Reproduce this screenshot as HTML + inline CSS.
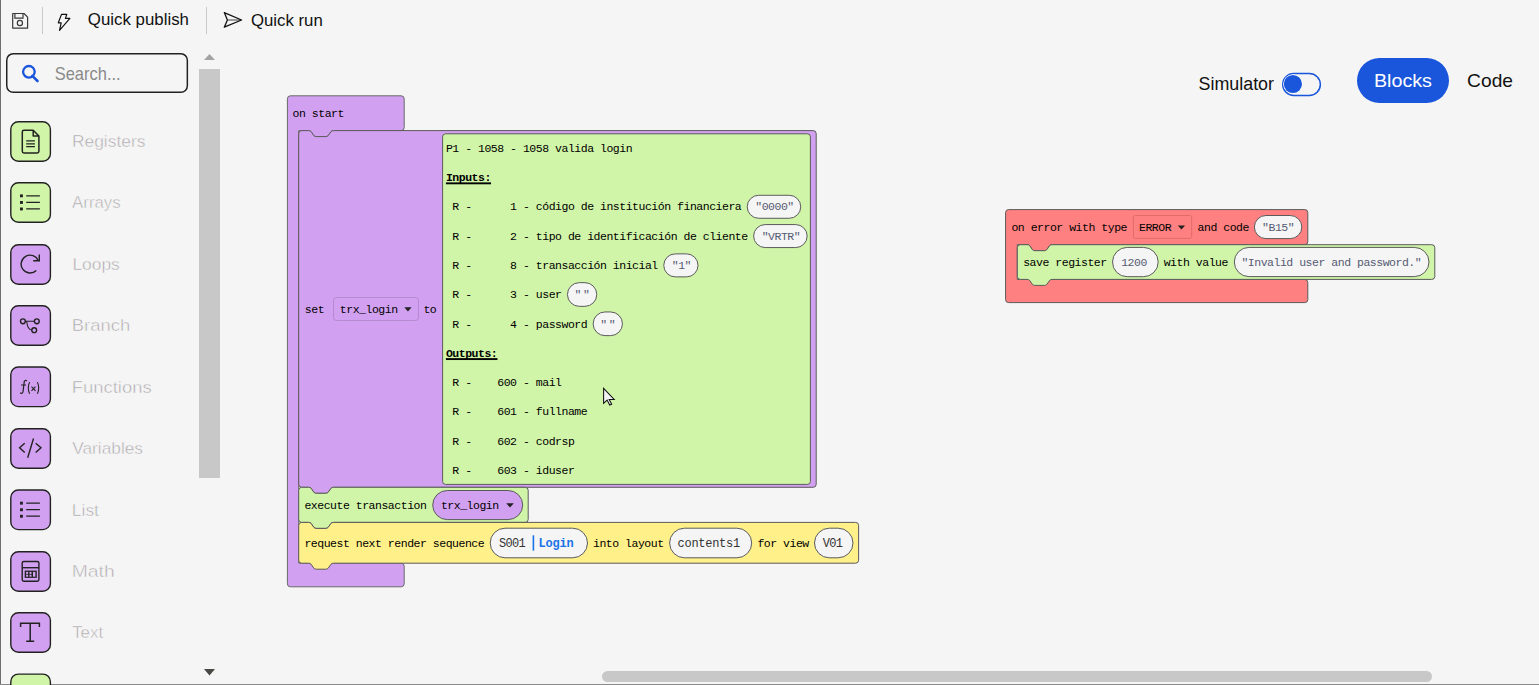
<!DOCTYPE html>
<html><head><meta charset="utf-8">
<style>
html,body{margin:0;padding:0;}
body{width:1539px;height:685px;overflow:hidden;background:#f5f5f5;position:relative;font-family:"Liberation Sans", sans-serif;}
.abs{position:absolute;}
svg text{white-space:pre;}
.bt{font-family:"Liberation Mono", monospace;font-size:11.5px;letter-spacing:-0.48px;fill:#000;}
.bold{font-weight:bold;}
.ft{font-family:"Liberation Mono", monospace;font-size:11.5px;letter-spacing:-0.48px;fill:#555b73;}
.ft2{font-family:"Liberation Mono", monospace;font-size:12px;letter-spacing:-0.7px;fill:#333;}
.lg{font-family:"Liberation Mono", monospace;font-size:12px;font-weight:bold;letter-spacing:-0.2px;fill:#1a73e8;}
.tb{position:absolute;font-size:17px;color:#111;white-space:nowrap;line-height:1;}
.cat{position:absolute;left:10px;width:38.2px;height:38.2px;border:1.4px solid #222;border-radius:8px;}
.catl{position:absolute;left:73px;font-size:17px;color:#c9c9c9;white-space:nowrap;line-height:1;}
</style></head><body>
<!-- frame borders -->
<div class="abs" style="left:0;top:0;width:1px;height:685px;background:#6e6e6e"></div>
<div class="abs" style="left:0;top:684px;width:1539px;height:1px;background:#8a8a8a"></div>

<!-- toolbar -->
<svg class="abs" style="left:0;top:0" width="340" height="45" viewBox="0 0 340 45">
  <g fill="none" stroke="#3a3a3a" stroke-width="1.2" stroke-linejoin="round">
    <path d="M12.7,13.5 H24 L27.6,17.2 V28.2 H12.7 Z"/>
    <path d="M14.9,13.5 V18.2 H23 V13.5"/>
    <circle cx="19.9" cy="23" r="2.6"/>
  </g>
  <rect x="42" y="7" width="1" height="27" fill="#c8c8c8"/>
  <path d="M61.5,14.4 H66.8 L65.4,18.4 H69.9 L59.5,30.3 L61.2,22.8 H58.3 Z" fill="none" stroke="#111" stroke-width="1.2" stroke-linejoin="round"/>
  <rect x="206" y="7" width="1" height="27" fill="#c8c8c8"/>
  <path d="M228,20 H240.6" stroke="#6a6a6a" stroke-width="1.3"/><path d="M224.3,12.6 L241.6,20 L224.3,27.2 L227.4,20 Z" fill="none" stroke="#111" stroke-width="1.3" stroke-linejoin="round"/>
</svg>
<svg class="abs" style="left:0;top:0;overflow:visible" width="1" height="1"><text transform="translate(87.87,25.20) scale(0.9794,1)" font-family="Liberation Sans, sans-serif" font-size="17.2" fill="#111" >Quick publish</text><text transform="translate(250.97,25.50) scale(0.9765,1)" font-family="Liberation Sans, sans-serif" font-size="17.2" fill="#111" >Quick run</text></svg>

<!-- search -->
<svg class="abs" style="left:0;top:0;overflow:visible" width="1" height="1"><rect x="6.75" y="53.75" width="180.6" height="38.6" rx="6.5" fill="none" stroke="#222" stroke-width="1.5"/></svg>
<svg class="abs" style="left:20px;top:63px" width="22" height="22" viewBox="0 0 22 22">
  <circle cx="8.9" cy="8.8" r="5.8" fill="none" stroke="#1a56db" stroke-width="2.3"/>
  <path d="M12.3,12.8 L17.5,18" stroke="#1a56db" stroke-width="2.6" stroke-linecap="round"/>
</svg>
<svg class="abs" style="left:0;top:0;overflow:visible" width="1" height="1"><text transform="translate(54.72,79.80) scale(0.8958,1)" font-family="Liberation Sans, sans-serif" font-size="18.4" fill="#8a8a8a" >Search...</text></svg>

<!-- categories placeholder -->
<svg class="abs" style="left:0;top:0;overflow:visible" width="1" height="1"><rect x="10.8" y="121.70" width="39.6" height="39.6" rx="7.6" fill="#d1f5a8" stroke="#222" stroke-width="1.4"/><g transform="translate(10.4,121.40)"><path d="M11.9,10.6 Q11.9,8.9 13.6,8.9 H22.8 L28.5,14.6 V29.9 Q28.5,31.6 26.8,31.6 H13.6 Q11.9,31.6 11.9,29.9 Z M22.8,8.9 V14.7 H28.5" fill="none" stroke="#222" stroke-width="1.5" stroke-linejoin="round"/><path d="M15.8,19.4 H24.5 M15.8,22.4 H24.5 M15.8,25.3 H24.5" stroke="#222" stroke-width="1.2"/></g></svg>
<svg class="abs" style="left:0;top:0;overflow:visible" width="1" height="1"><text transform="translate(71.89,147.20) scale(1.0251,1)" font-family="Liberation Sans, sans-serif" font-size="17" fill="#aaa6aa" stroke="#f5f5f5" stroke-width="0.5">Registers</text></svg>
<svg class="abs" style="left:0;top:0;overflow:visible" width="1" height="1"><rect x="10.8" y="182.70" width="39.6" height="39.6" rx="7.6" fill="#d1f5a8" stroke="#222" stroke-width="1.4"/><g transform="translate(10.4,182.40)"><rect x="9.6" y="12" width="2.9" height="2.9" fill="#222"/><rect x="9.6" y="18.6" width="2.9" height="2.9" fill="#222"/><rect x="9.6" y="25.1" width="2.9" height="2.9" fill="#222"/><path d="M15.8,13.4 H29.5 M15.8,20 H29.5 M15.8,26.5 H29.5" stroke="#222" stroke-width="1.3"/></g></svg>
<svg class="abs" style="left:0;top:0;overflow:visible" width="1" height="1"><text transform="translate(72.10,208.20) scale(0.9897,1)" font-family="Liberation Sans, sans-serif" font-size="17" fill="#aaa6aa" stroke="#f5f5f5" stroke-width="0.5">Arrays</text></svg>
<svg class="abs" style="left:0;top:0;overflow:visible" width="1" height="1"><rect x="10.8" y="244.70" width="39.6" height="39.6" rx="7.6" fill="#d2a0f0" stroke="#222" stroke-width="1.4"/><g transform="translate(10.4,244.40)"><path d="M25.9,26.0 A8.9,8.9 0 1 1 27.9,16.4" fill="none" stroke="#222" stroke-width="1.4"/><path d="M28.9,10 V16.3 H22.8" fill="none" stroke="#222" stroke-width="1.4"/></g></svg>
<svg class="abs" style="left:0;top:0;overflow:visible" width="1" height="1"><text transform="translate(72.39,270.20) scale(1.0231,1)" font-family="Liberation Sans, sans-serif" font-size="17" fill="#aaa6aa" stroke="#f5f5f5" stroke-width="0.5">Loops</text></svg>
<svg class="abs" style="left:0;top:0;overflow:visible" width="1" height="1"><rect x="10.8" y="305.70" width="39.6" height="39.6" rx="7.6" fill="#d2a0f0" stroke="#222" stroke-width="1.4"/><g transform="translate(10.4,305.40)"><circle cx="12.5" cy="15.9" r="2.4" fill="none" stroke="#222" stroke-width="1.4"/><circle cx="26.4" cy="15.9" r="2.4" fill="none" stroke="#222" stroke-width="1.4"/><circle cx="23.8" cy="24.8" r="2.4" fill="none" stroke="#222" stroke-width="1.4"/><path d="M14.9,15.9 H24 M16.3,15.9 Q17,24.3 21.4,24.8" fill="none" stroke="#222" stroke-width="1.1"/></g></svg>
<svg class="abs" style="left:0;top:0;overflow:visible" width="1" height="1"><text transform="translate(71.71,331.20) scale(1.0861,1)" font-family="Liberation Sans, sans-serif" font-size="17" fill="#aaa6aa" stroke="#f5f5f5" stroke-width="0.5">Branch</text></svg>
<svg class="abs" style="left:0;top:0;overflow:visible" width="1" height="1"><rect x="10.8" y="367.00" width="39.6" height="39.6" rx="7.6" fill="#d2a0f0" stroke="#222" stroke-width="1.4"/><g transform="translate(10.4,366.70)"><path d="M16.6,14.2 Q15,12.9 13.9,14.6 L12.6,25.2 Q12,27.3 9.8,26.2 M10.6,18.3 H15.6" fill="none" stroke="#222" stroke-width="1.2"/><path d="M19.2,15.4 Q16.6,21.2 19.2,27.1 M27,15.4 Q29.6,21.2 27,27.1 M21.1,20 L25.1,24.1 M25.1,20 L21.1,24.1" fill="none" stroke="#222" stroke-width="1.1"/></g></svg>
<svg class="abs" style="left:0;top:0;overflow:visible" width="1" height="1"><text transform="translate(71.71,392.50) scale(1.0857,1)" font-family="Liberation Sans, sans-serif" font-size="17" fill="#aaa6aa" stroke="#f5f5f5" stroke-width="0.5">Functions</text></svg>
<svg class="abs" style="left:0;top:0;overflow:visible" width="1" height="1"><rect x="10.8" y="428.70" width="39.6" height="39.6" rx="7.6" fill="#d2a0f0" stroke="#222" stroke-width="1.4"/><g transform="translate(10.4,428.40)"><path d="M14.3,14.8 L9.2,19.4 L14.3,24.2 M25.3,14.8 L30.6,19.4 L25.3,24.2 M23.1,10.1 L17.3,29.3" fill="none" stroke="#222" stroke-width="1.4"/></g></svg>
<svg class="abs" style="left:0;top:0;overflow:visible" width="1" height="1"><text transform="translate(72.27,454.20) scale(1.0163,1)" font-family="Liberation Sans, sans-serif" font-size="17" fill="#aaa6aa" stroke="#f5f5f5" stroke-width="0.5">Variables</text></svg>
<svg class="abs" style="left:0;top:0;overflow:visible" width="1" height="1"><rect x="10.8" y="490.00" width="39.6" height="39.6" rx="7.6" fill="#d2a0f0" stroke="#222" stroke-width="1.4"/><g transform="translate(10.4,489.70)"><rect x="9.6" y="12" width="2.9" height="2.9" fill="#222"/><rect x="9.6" y="18.6" width="2.9" height="2.9" fill="#222"/><rect x="9.6" y="25.1" width="2.9" height="2.9" fill="#222"/><path d="M15.8,13.4 H29.5 M15.8,20 H29.5 M15.8,26.5 H29.5" stroke="#222" stroke-width="1.3"/></g></svg>
<svg class="abs" style="left:0;top:0;overflow:visible" width="1" height="1"><text transform="translate(71.79,515.50) scale(1.0280,1)" font-family="Liberation Sans, sans-serif" font-size="17" fill="#aaa6aa" stroke="#f5f5f5" stroke-width="0.5">List</text></svg>
<svg class="abs" style="left:0;top:0;overflow:visible" width="1" height="1"><rect x="10.8" y="551.70" width="39.6" height="39.6" rx="7.6" fill="#d2a0f0" stroke="#222" stroke-width="1.4"/><g transform="translate(10.4,551.40)"><g transform="translate(0,0.6)"><rect x="11.8" y="9.5" width="16.7" height="19.7" rx="1.6" fill="none" stroke="#222" stroke-width="1.4"/><path d="M11.8,15.7 H28.5" stroke="#222" stroke-width="1.4"/><rect x="14.3" y="18.6" width="12.1" height="7.3" fill="#222"/><rect x="15.7" y="19.9" width="2" height="2" fill="#d2a0f0"/><rect x="19.1" y="19.9" width="2" height="2" fill="#d2a0f0"/><rect x="15.7" y="22.7" width="2" height="2" fill="#d2a0f0"/><rect x="19.1" y="22.7" width="2" height="2" fill="#d2a0f0"/><rect x="22.6" y="19.9" width="2.4" height="4.8" fill="#d2a0f0"/></g></g></svg>
<svg class="abs" style="left:0;top:0;overflow:visible" width="1" height="1"><text transform="translate(71.63,577.20) scale(1.1420,1)" font-family="Liberation Sans, sans-serif" font-size="17" fill="#aaa6aa" stroke="#f5f5f5" stroke-width="0.5">Math</text></svg>
<svg class="abs" style="left:0;top:0;overflow:visible" width="1" height="1"><rect x="10.8" y="612.70" width="39.6" height="39.6" rx="7.6" fill="#d2a0f0" stroke="#222" stroke-width="1.4"/><g transform="translate(10.4,612.40)"><path d="M10.2,14.6 V10.9 H29 V14.6 M19.8,10.9 V28.9 M15.8,28.9 H23.8" fill="none" stroke="#222" stroke-width="1.5"/></g></svg>
<svg class="abs" style="left:0;top:0;overflow:visible" width="1" height="1"><text transform="translate(72.13,638.20) scale(0.9951,1)" font-family="Liberation Sans, sans-serif" font-size="17" fill="#aaa6aa" stroke="#f5f5f5" stroke-width="0.5">Text</text></svg>
<svg class="abs" style="left:0;top:0;overflow:visible" width="1" height="1"><rect x="10.8" y="674.10" width="39.6" height="39.6" rx="7.6" fill="#d1f5a8" stroke="#222" stroke-width="1.4"/><g transform="translate(10.4,673.80)"></g></svg>

<!-- left scrollbar -->
<svg class="abs" style="left:195px;top:45px" width="30" height="640" viewBox="195 45 30 640">
  <path d="M204,60 L215,60 L209.5,54 Z" fill="#a3a3a3"/>
  <rect x="199" y="69" width="21" height="409" fill="#c8c8c8"/>
  <path d="M204,669 L215,669 L209.5,675.5 Z" fill="#4a4845"/>
</svg>

<!-- blocks -->
<svg class="abs" style="left:0;top:0" width="1539" height="685" viewBox="0 0 1539 685">
<path d="M287.40,98.80 Q287.40,95.80 290.40,95.80 L401.20,95.80 Q404.20,95.80 404.20,98.80 L404.20,127.60 Q404.20,130.60 401.20,130.60 L333.60,130.60 Q332.00,130.60 331.00,131.60 L328.20,135.60 Q327.30,136.60 325.70,136.60 L316.30,136.60 Q314.70,136.60 313.80,135.60 L311.10,131.60 Q310.10,130.60 308.50,130.60 L298.70,130.60 L298.70,563.20 L401.20,563.20 Q404.20,563.20 404.20,566.20 L404.20,583.80 Q404.20,586.80 401.20,586.80 L290.40,586.80 Q287.40,586.80 287.40,583.80 Z" fill="#d2a0f0" stroke="#6a6a6a" stroke-width="1"/>
<text x="292.60" y="117.10" class="bt" >on start</text>
<path d="M298.70,133.60 Q298.70,130.60 301.70,130.60 L308.50,130.60 Q310.10,130.60 311.10,131.60 L313.80,135.60 Q314.70,136.60 316.30,136.60 L325.70,136.60 Q327.30,136.60 328.20,135.60 L331.00,131.60 Q332.00,130.60 333.60,130.60 L813.20,130.60 Q816.20,130.60 816.20,133.60 L816.20,484.30 Q816.20,487.30 813.20,487.30 L333.60,487.30 Q332.00,487.30 331.00,488.30 L328.20,492.30 Q327.30,493.30 325.70,493.30 L316.30,493.30 Q314.70,493.30 313.80,492.30 L311.10,488.30 Q310.10,487.30 308.50,487.30 L301.70,487.30 Q298.70,487.30 298.70,484.30 Z" fill="#d2a0f0" stroke="#5a5a5a" stroke-width="1"/>
<text x="304.80" y="313.00" class="bt" >set</text>
<rect x="333.5" y="297.5" width="85" height="23" rx="3" ry="3" fill="#d2a0f0" stroke="#b48ad0" stroke-width="1"/>
<text x="339.80" y="313.00" class="bt" >trx_login</text>
<path d="M404.30,307.20 L411.60,307.20 L407.95,311.40 Z" fill="#222"/>
<text x="423.40" y="313.00" class="bt" >to</text>
<rect x="442.6" y="133.8" width="367.8" height="350.6" rx="3" ry="3" fill="#d1f5a8" stroke="#5a5a5a" stroke-width="1"/>
<text x="445.90" y="151.80" class="bt" >P1 - 1058 - 1058 valida login</text>
<text x="445.90" y="181.09" class="bt bold" >Inputs:</text>
<rect x="445.9" y="182.39" width="45.14" height="1.9" fill="#000"/>
<text x="445.90" y="210.38" class="bt" > R -      1 - código de institución financiera</text>
<rect x="747.22" y="195.28" width="53.52" height="23.00" rx="11.50" ry="11.50" fill="#f5f5f5" stroke="#5a5a5a" stroke-width="1"/>
<text x="755.22" y="210.38" class="ft" >"0000"</text>
<text x="445.90" y="239.67" class="bt" > R -      2 - tipo de identificación de cliente</text>
<rect x="753.64" y="224.57" width="53.52" height="23.00" rx="11.50" ry="11.50" fill="#f5f5f5" stroke="#5a5a5a" stroke-width="1"/>
<text x="761.64" y="239.67" class="ft" >"VRTR"</text>
<text x="445.90" y="268.96" class="bt" > R -      8 - transacción inicial</text>
<rect x="663.76" y="253.86" width="34.26" height="23.00" rx="11.50" ry="11.50" fill="#f5f5f5" stroke="#5a5a5a" stroke-width="1"/>
<text x="671.76" y="268.96" class="ft" >"1"</text>
<text x="445.90" y="298.25" class="bt" > R -      3 - user</text>
<rect x="567.46" y="282.65" width="29.30" height="23.70" rx="11.85" ry="11.85" fill="#f5f5f5" stroke="#5a5a5a" stroke-width="1"/>
<text x="574.46" y="298.25" class="ft" >"</text>
<text x="583.06" y="298.25" class="ft" >"</text>
<text x="445.90" y="327.54" class="bt" > R -      4 - password</text>
<rect x="593.14" y="311.94" width="29.30" height="23.70" rx="11.85" ry="11.85" fill="#f5f5f5" stroke="#5a5a5a" stroke-width="1"/>
<text x="600.14" y="327.54" class="ft" >"</text>
<text x="608.74" y="327.54" class="ft" >"</text>
<text x="445.90" y="356.83" class="bt bold" >Outputs:</text>
<rect x="445.9" y="358.13" width="51.56" height="1.9" fill="#000"/>
<text x="445.90" y="386.12" class="bt" > R -    600 - mail</text>
<text x="445.90" y="415.41" class="bt" > R -    601 - fullname</text>
<text x="445.90" y="444.70" class="bt" > R -    602 - codrsp</text>
<text x="445.90" y="473.99" class="bt" > R -    603 - iduser</text>
<path d="M298.70,490.30 Q298.70,487.30 301.70,487.30 L308.50,487.30 Q310.10,487.30 311.10,488.30 L313.80,492.30 Q314.70,493.30 316.30,493.30 L325.70,493.30 Q327.30,493.30 328.20,492.30 L331.00,488.30 Q332.00,487.30 333.60,487.30 L525.20,487.30 Q528.20,487.30 528.20,490.30 L528.20,519.40 Q528.20,522.40 525.20,522.40 L333.60,522.40 Q332.00,522.40 331.00,523.40 L328.20,527.40 Q327.30,528.40 325.70,528.40 L316.30,528.40 Q314.70,528.40 313.80,527.40 L311.10,523.40 Q310.10,522.40 308.50,522.40 L301.70,522.40 Q298.70,522.40 298.70,519.40 Z" fill="#d1f5a8" stroke="#5a5a5a" stroke-width="1"/>
<text x="304.40" y="509.00" class="bt" >execute transaction</text>
<rect x="432.70" y="490.50" width="90.00" height="29.10" rx="14.55" ry="14.55" fill="#d2a0f0" stroke="#5a5a5a" stroke-width="1"/>
<text x="440.90" y="509.00" class="bt" >trx_login</text>
<path d="M506.20,503.30 L513.80,503.30 L510.00,507.60 Z" fill="#222"/>
<path d="M298.70,525.40 Q298.70,522.40 301.70,522.40 L308.50,522.40 Q310.10,522.40 311.10,523.40 L313.80,527.40 Q314.70,528.40 316.30,528.40 L325.70,528.40 Q327.30,528.40 328.20,527.40 L331.00,523.40 Q332.00,522.40 333.60,522.40 L855.60,522.40 Q858.60,522.40 858.60,525.40 L858.60,560.20 Q858.60,563.20 855.60,563.20 L333.60,563.20 Q332.00,563.20 331.00,564.20 L328.20,568.20 Q327.30,569.20 325.70,569.20 L316.30,569.20 Q314.70,569.20 313.80,568.20 L311.10,564.20 Q310.10,563.20 308.50,563.20 L301.70,563.20 Q298.70,563.20 298.70,560.20 Z" fill="#fff08a" stroke="#5a5a5a" stroke-width="1"/>
<text x="304.40" y="547.30" class="bt" >request next render sequence</text>
<rect x="490.20" y="528.20" width="97.30" height="29.60" rx="14.80" ry="14.80" fill="#f5f5f5" stroke="#5a5a5a" stroke-width="1"/>
<text x="499.00" y="547.00" class="ft2" >S001</text>
<rect x="532.6" y="535.3" width="1.6" height="15.3" fill="#1a73e8"/>
<text x="538.60" y="547.00" class="lg" >Login</text>
<text x="593.00" y="547.30" class="bt" >into layout</text>
<rect x="669.60" y="528.20" width="82.10" height="29.60" rx="14.80" ry="14.80" fill="#f5f5f5" stroke="#5a5a5a" stroke-width="1"/>
<text x="677.60" y="547.30" class="ft2" style="letter-spacing:-0.28px">contents1</text>
<text x="757.40" y="547.30" class="bt" >for view</text>
<rect x="814.50" y="528.20" width="38.50" height="29.60" rx="14.80" ry="14.80" fill="#f5f5f5" stroke="#5a5a5a" stroke-width="1"/>
<text x="822.80" y="547.30" class="ft2" >V01</text>
<path d="M1005.60,212.60 Q1005.60,209.60 1008.60,209.60 L1304.80,209.60 Q1307.80,209.60 1307.80,212.60 L1307.80,241.70 Q1307.80,244.70 1304.80,244.70 L1052.20,244.70 Q1050.60,244.70 1049.60,245.70 L1046.80,249.70 Q1045.90,250.70 1044.30,250.70 L1034.90,250.70 Q1033.30,250.70 1032.40,249.70 L1029.70,245.70 Q1028.70,244.70 1027.10,244.70 L1017.30,244.70 L1017.30,279.50 L1304.80,279.50 Q1307.80,279.50 1307.80,282.50 L1307.80,299.60 Q1307.80,302.60 1304.80,302.60 L1008.60,302.60 Q1005.60,302.60 1005.60,299.60 Z" fill="#ff8080" stroke="#5a5a5a" stroke-width="1"/>
<text x="1011.40" y="230.90" class="bt" >on error with type</text>
<rect x="1133.4" y="215.5" width="58.3" height="22.9" rx="2" ry="2" fill="#ff8080" stroke="#e06a6a" stroke-width="1"/>
<text x="1139.00" y="230.90" class="bt" >ERROR</text>
<path d="M1177.80,225.40 L1185.10,225.40 L1181.45,229.60 Z" fill="#222"/>
<text x="1197.60" y="230.90" class="bt" >and code</text>
<rect x="1254.40" y="215.50" width="47.40" height="23.10" rx="11.55" ry="11.55" fill="#f5f5f5" stroke="#5a5a5a" stroke-width="1"/>
<text x="1262.10" y="230.90" class="ft" >"B15"</text>
<path d="M1017.30,247.70 Q1017.30,244.70 1020.30,244.70 L1027.10,244.70 Q1028.70,244.70 1029.70,245.70 L1032.40,249.70 Q1033.30,250.70 1034.90,250.70 L1044.30,250.70 Q1045.90,250.70 1046.80,249.70 L1049.60,245.70 Q1050.60,244.70 1052.20,244.70 L1431.80,244.70 Q1434.80,244.70 1434.80,247.70 L1434.80,276.40 Q1434.80,279.40 1431.80,279.40 L1052.20,279.40 Q1050.60,279.40 1049.60,280.40 L1046.80,284.40 Q1045.90,285.40 1044.30,285.40 L1034.90,285.40 Q1033.30,285.40 1032.40,284.40 L1029.70,280.40 Q1028.70,279.40 1027.10,279.40 L1020.30,279.40 Q1017.30,279.40 1017.30,276.40 Z" fill="#d1f5a8" stroke="#5a5a5a" stroke-width="1"/>
<text x="1023.20" y="265.90" class="bt" >save register</text>
<rect x="1112.50" y="247.40" width="45.70" height="29.30" rx="14.65" ry="14.65" fill="#f5f5f5" stroke="#5a5a5a" stroke-width="1"/>
<text x="1121.20" y="265.90" class="ft" >1200</text>
<text x="1163.70" y="265.90" class="bt" >with value</text>
<rect x="1234.30" y="247.40" width="194.70" height="29.20" rx="14.60" ry="14.60" fill="#f5f5f5" stroke="#5a5a5a" stroke-width="1"/>
<text x="1241.40" y="265.90" class="ft" >"Invalid user and password."</text>
  <!-- cursor -->
  <path d="M603.6,388.4 L603.6,403.4 L607.1,400.1 L609.7,405.1 L611.7,404.2 L609.2,399.5 L614.2,399.5 Z" fill="#f2f2f2" stroke="#111" stroke-width="1.05" stroke-linejoin="miter"/>
</svg>

<!-- top right -->
<svg class="abs" style="left:0;top:0;overflow:visible" width="1" height="1"><text transform="translate(1198.61,90.00) scale(1.0144,1)" font-family="Liberation Sans, sans-serif" font-size="17.6" fill="#111" >Simulator</text></svg>
<svg class="abs" style="left:0;top:0;overflow:visible" width="1" height="1"><rect x="1282.75" y="73.5" width="37.6" height="22" rx="11" fill="#f5f5f5" stroke="#1a56db" stroke-width="1.5"/><circle cx="1292.9" cy="84" r="9.7" fill="#fff"/><circle cx="1292.9" cy="84" r="9.1" fill="#1a56db"/></svg>
<div class="abs" style="left:1357px;top:58px;width:92px;height:45px;border-radius:23px;background:#1a56db"></div>
<svg class="abs" style="left:0;top:0;overflow:visible" width="1" height="1"><text transform="translate(1373.91,87.20) scale(1.0597,1)" font-family="Liberation Sans, sans-serif" font-size="18.6" fill="#fff" font-weight="500" >Blocks</text><text transform="translate(1467.10,87.20) scale(1.0323,1)" font-family="Liberation Sans, sans-serif" font-size="18.6" fill="#111" >Code</text></svg>

<!-- horizontal scrollbar -->
<div class="abs" style="left:602px;top:671px;width:830px;height:11px;border-radius:5.5px;background:#c8c8c8"></div>
</body></html>
